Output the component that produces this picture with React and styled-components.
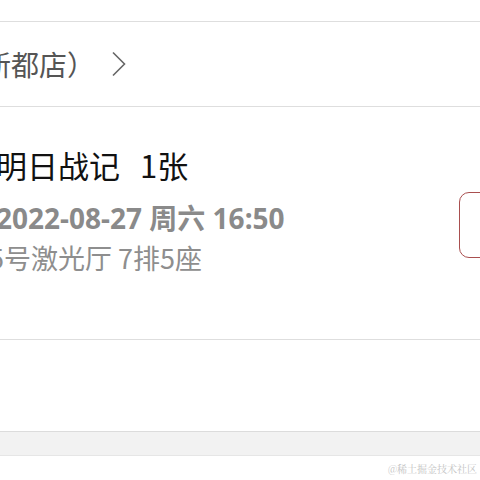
import React from "react";
import styled, { createGlobalStyle } from "styled-components";

const GlobalStyle = createGlobalStyle`
  html, body {
    margin: 0;
    padding: 0;
    background: #fff;
    overflow: hidden;
  }
  body {
    font-family: "Noto Sans CJK SC", "Noto Sans", sans-serif;
  }
`;

const Page = styled.div`
  width: 480px;
  height: 480px;
  display: flex;
  flex-direction: column;
  position: relative;
  overflow: hidden;
`;

const TopGap = styled.div`
  height: 21px;
  border-bottom: 1px solid #dedede;
`;

const StoreRow = styled.div`
  height: 83px;
  display: flex;
  align-items: center;
  gap: 16px;
  border-bottom: 1px solid #dedede;
  padding-bottom: 1px;
`;

const StoreName = styled.span`
  font-size: 28px;
  color: #555;
  margin-left: -17px;
  white-space: nowrap;
`;

const Chevron = styled.svg`
  width: 16px;
  height: 26px;
  flex: none;
`;

const Ticket = styled.div`
  height: 232px;
  display: flex;
  align-items: flex-start;
  justify-content: space-between;
  border-bottom: 1px solid #dedede;
`;

const Info = styled.div`
  display: flex;
  flex-direction: column;
  margin-left: -4px;
  padding-top: 38px;
`;

const Title = styled.div`
  font-size: 31px;
  line-height: 40px;
  color: #111;
  white-space: nowrap;
`;

const Count = styled.span`
  margin-left: 20px;
`;

const ShowTime = styled.div`
  font-family: "Noto Sans", "Noto Sans CJK SC", sans-serif;
  font-size: 28px;
  font-weight: 700;
  line-height: 36px;
  color: #8a8a8a;
  margin-top: 15px;
  white-space: nowrap;
`;

const Seat = styled.div`
  font-size: 27px;
  line-height: 34px;
  color: #8e8e8e;
  margin-top: 5px;
  text-indent: -7px;
  white-space: nowrap;
`;

const ActionButton = styled.button`
  margin-top: 85px;
  margin-right: -40px;
  width: 61px;
  height: 66px;
  border: 1.5px solid #a94f4f;
  border-radius: 10px;
  background: #fff;
  flex: none;
`;

const Spacer = styled.div`
  height: 91px;
`;

const Band = styled.div`
  height: 23px;
  background: #f2f2f2;
  border-top: 1px solid #dcdcdc;
  border-bottom: 1px solid #e6e6e6;
`;

const Watermark = styled.span`
  position: absolute;
  right: 3px;
  bottom: 4px;
  font-family: "Noto Serif CJK SC", "Noto Sans CJK SC", serif;
  font-size: 10px;
  color: #c4c4c4;
`;

export default function App() {
  return (
    <>
      <GlobalStyle />
      <Page>
        <TopGap />
        <StoreRow>
          <StoreName>新都店）</StoreName>
          <Chevron viewBox="0 0 16 26">
            <path d="M2 1.5 L13.5 13 L2 24.5" fill="none" stroke="#666" strokeWidth="1.6" />
          </Chevron>
        </StoreRow>
        <Ticket>
          <Info>
            <Title>
              明日战记<Count>1张</Count>
            </Title>
            <ShowTime>2022-08-27 周六 16:50</ShowTime>
            <Seat>5号激光厅 7排5座</Seat>
          </Info>
          <ActionButton />
        </Ticket>
        <Spacer />
        <Band />
        <Watermark>@稀土掘金技术社区</Watermark>
      </Page>
    </>
  );
}
